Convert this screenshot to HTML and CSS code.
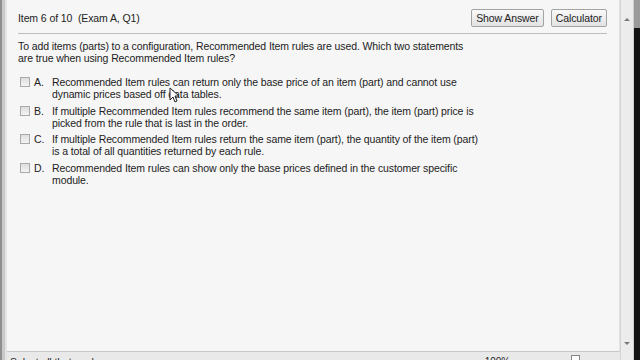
FILE: index.html
```html
<!DOCTYPE html>
<html>
<head>
<meta charset="utf-8">
<link rel="stylesheet" href="styles.css">
</head>
<body>
<div class="frame">
  <div class="edge-left"></div>
  <div class="main">
    <div class="content">
      <div class="header">
        <div class="item-title">Item 6 of 10&nbsp; (Exam A, Q1)</div>
        <div class="buttons">
          <button class="btn">Show Answer</button>
          <button class="btn">Calculator</button>
        </div>
      </div>
      <div class="question">To add items (parts) to a configuration, Recommended Item rules are used. Which two statements<br>are true when using Recommended Item rules?</div>
      <div class="options">
        <div class="option"><span class="check"></span><span class="letter">A.</span><span class="text">Recommended Item rules can return only the base price of an item (part) and cannot use<br>dynamic prices based off data tables.</span></div>
        <div class="option"><span class="check"></span><span class="letter">B.</span><span class="text">If multiple Recommended Item rules recommend the same item (part), the item (part) price is<br>picked from the rule that is last in the order.</span></div>
        <div class="option"><span class="check"></span><span class="letter">C.</span><span class="text">If multiple Recommended Item rules return the same item (part), the quantity of the item (part)<br>is a total of all quantities returned by each rule.</span></div>
        <div class="option"><span class="check"></span><span class="letter">D.</span><span class="text">Recommended Item rules can show only the base prices defined in the customer specific<br>module.</span></div>
      </div>
      <svg class="cursor" width="10" height="16" viewBox="0 0 10 16"><path d="M1 1 L1 13 L4 10 L6 15 L8 14 L6 9 L10 9 Z" fill="#fff" stroke="#222" stroke-width="1"/></svg>
    </div>
    <div class="status">
      <span class="status-text">Select all that apply</span>
      <span class="zoom">100%</span>
      <span class="mini-box"></span>
    </div>
  </div>
  <div class="scrollbar">
    <span class="arrow up"></span>
    <span class="arrow down"></span>
  </div>
  <div class="edge-right"></div>
</div>
</body>
</html>
```

FILE: styles.css
```css
html, body {
  margin: 0;
  padding: 0;
  width: 640px;
  height: 360px;
  overflow: hidden;
  font-family: "Liberation Sans", Arial, sans-serif;
  font-size: 10.5px;
  letter-spacing: -0.1px;
  color: #222;
}
.frame {
  display: flex;
  width: 640px;
  height: 360px;
}
.edge-left {
  width: 7px;
  background: linear-gradient(to right, #8f8f8f 0, #8f8f8f 2px, #c9c9c9 2px, #c9c9c9 5px, #e4e4e4 5px);
}
.main {
  flex: 1;
  display: flex;
  flex-direction: column;
  background: #f6f6f6;
}
.content {
  flex: 1;
  position: relative;
  border-bottom: 1px solid #c6c6c6;
  border-right: 1px solid #e2e2e2;
}
.header {
  display: flex;
  justify-content: space-between;
  align-items: center;
  margin: 0 12px 0 11px;
  padding: 9px 0 6px;
  border-bottom: 1px solid #bcbcbc;
}
.item-title {
  font-size: 10.5px;
}
.buttons {
  display: flex;
  gap: 7px;
}
.btn {
  font-family: "Liberation Sans", Arial, sans-serif;
  font-size: 10.5px;
  letter-spacing: -0.1px;
  color: #222;
  height: 18px;
  padding: 0 4px;
  border: 1px solid #a3a3a3;
  border-radius: 2px;
  background: linear-gradient(#f9f9f9, #e2e2e2);
}
.question {
  margin: 6px 0 0 11px;
  line-height: 12px;
  white-space: nowrap;
}
.options {
  margin: 12px 0 0 13px;
  display: flex;
  flex-direction: column;
  gap: 4.5px;
}
.option {
  display: flex;
  align-items: flex-start;
  line-height: 12px;
  white-space: nowrap;
}
.check {
  width: 8px;
  height: 8px;
  margin-top: 1px;
  border: 1px solid #a9a9a9;
  background: linear-gradient(#dedede, #f4f4f4);
  flex-shrink: 0;
}
.letter {
  width: 18px;
  margin-left: 4px;
}
.cursor {
  position: absolute;
  left: 162px;
  top: 87px;
}
.status {
  height: 8px;
  background: #e9e9e9;
  display: flex;
  align-items: flex-start;
  overflow: hidden;
  position: relative;
}
.status-text {
  margin: 4px 0 0 3px;
  font-size: 10.5px;
  line-height: 12px;
}
.zoom {
  margin: 4px 0 0 auto;
  font-size: 10px;
  line-height: 12px;
}
.mini-box {
  width: 7px;
  height: 7px;
  margin: 3px 40px 0 61px;
  border: 1px solid #888;
  background: #fff;
}
.scrollbar {
  width: 12px;
  background: #ececec;
  border-left: 1px solid #d4d4d4;
  display: flex;
  flex-direction: column;
  justify-content: space-between;
  align-items: center;
  padding: 18px 0 15px;
}
.arrow {
  width: 0;
  height: 0;
  border-left: 3px solid transparent;
  border-right: 3px solid transparent;
}
.arrow.up {
  border-bottom: 3px solid #7a7a7a;
}
.arrow.down {
  border-top: 3px solid #7a7a7a;
}
.edge-right {
  width: 6px;
  background: linear-gradient(#9a9a9a 0, #9a9a9a 28px, #141414 28px);
  border-left: 1px solid #cfcfcf;
}
```
